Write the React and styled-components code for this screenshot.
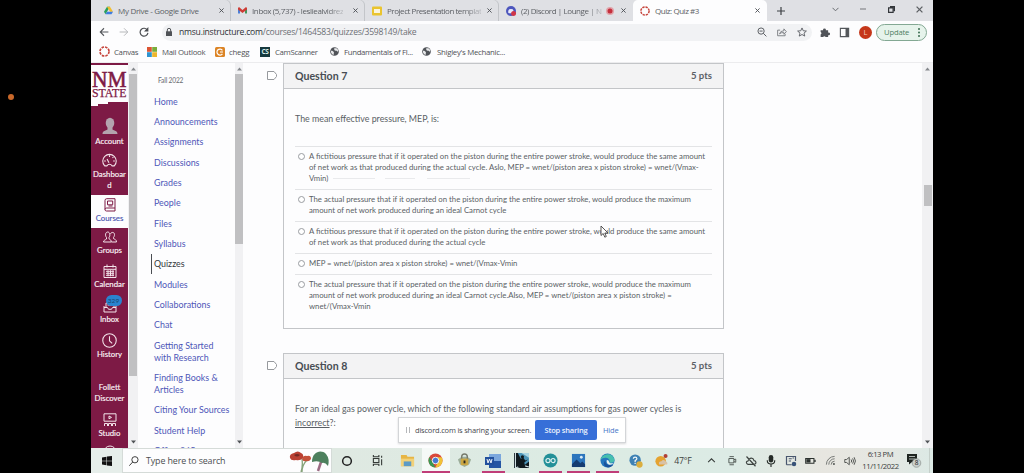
import React from 'react';
import styled, { createGlobalStyle } from 'styled-components';

const ui = '"Open Sans", "Noto Sans", sans-serif';
const lato = 'Lato, "Open Sans", sans-serif';
const maroon = '#7d1a45';

const GlobalStyle = createGlobalStyle`
	* {
		box-sizing: border-box;
	}
	body {
		margin: 0;
		background: #000;
		overflow: hidden;
	}
	svg {
		display: block;
		flex: none;
	}
`;

const Desktop = styled.main`
	position: relative;
	height: 473px;
	padding: 0 91px;
	background: #000;
`;

const Screen = styled.div`
	width: 842px;
	height: 473px;
	display: flex;
	flex-direction: column;
	background: #fdfdfe;
	font-family: ${ui};
	white-space: nowrap;
	overflow: hidden;
`;

const RecordDot = styled.span`
	position: absolute;
	left: 8px;
	top: 94px;
	width: 6px;
	height: 6px;
	border-radius: 50%;
	background: #c8682a;
`;

/* browser chrome */

const TabStrip = styled.div`
	flex: none;
	height: 21px;
	display: flex;
	padding-left: 6px;
	background: #dfe0e4;
`;

const Tab = styled.div`
	width: 134px;
	height: 21px;
	display: flex;
	align-items: center;
	padding: 0 7px 0 7px;
	border-radius: 5px 5px 0 0;
	background: ${p => (p.$active ? '#fdfdfe' : 'transparent')};
	box-shadow: ${p => (p.$divider ? 'inset -1px 0 #c3c5c9' : 'none')};
`;

const TabTitle = styled.span`
	margin-left: 5px;
	font-size: 8px;
	line-height: 20px;
	letter-spacing: ${p => p.$spacing || 0}px;
	color: #5c5f64;
	mask-image: ${p => (p.$fade ? 'linear-gradient(90deg, #000 82%, rgba(0, 0, 0, 0.25))' : 'none')};
`;

const TabEnd = styled.span`
	display: flex;
	align-items: center;
	gap: 7px;
	margin-left: auto;
`;

const WindowButtons = styled.div`
	margin-left: auto;
	display: flex;
	align-items: center;
	padding-bottom: 3px;
`;

const WindowButton = styled.span`
	width: 28px;
	display: flex;
	justify-content: center;
`;

const NewTab = styled.span`
	width: 27px;
	display: flex;
	align-items: center;
	justify-content: center;
`;

const AddressRow = styled.div`
	flex: none;
	height: 22px;
	display: flex;
	align-items: center;
	padding: 0 6px 0 8px;
`;

const NavButtons = styled.div`
	width: 63px;
	display: flex;
	align-items: center;
	gap: 10px;
`;

const Omnibox = styled.div`
	width: 650px;
	height: 17px;
	display: flex;
	align-items: center;
	padding: 0 5px 0 4px;
	border-radius: 9px;
	background: #f1f2f4;
`;

const Url = styled.span`
	flex: 1;
	margin-left: 7px;
	font-size: 8.6px;
	letter-spacing: -0.24px;
	color: #6d7075;

	b {
		font-weight: 400;
		color: #2e3034;
	}
`;

const OmniIcons = styled.div`
	display: flex;
	gap: 10px;
`;

const ToolbarIcons = styled.div`
	flex: 1;
	display: flex;
	align-items: center;
	justify-content: flex-end;
	gap: 9px;
`;

const Avatar = styled.span`
	width: 13px;
	height: 13px;
	border-radius: 50%;
	background: #c5371a;
	color: #f5cdbb;
	font-size: 7.5px;
	line-height: 13px;
	text-align: center;
`;

const UpdateButton = styled.span`
	width: 51px;
	height: 17px;
	margin-left: -5px;
	display: flex;
	align-items: center;
	justify-content: space-between;
	padding: 0 6px 0 7px;
	border: 1px solid #83a893;
	border-radius: 9px;
	background: #e6f3eb;
	font-size: 7.6px;
	letter-spacing: -0.15px;
	color: #4c7e62;
`;

const Bookmarks = styled.div`
	flex: none;
	height: 20px;
	display: flex;
	align-items: center;
	padding: 0 0 2px 8px;
	border-bottom: 1px solid #ececee;
`;

const Bookmark = styled.span`
	width: ${p => p.$width}px;
	display: flex;
	align-items: center;
	gap: ${p => p.$gap || 4}px;
	font-size: 7.8px;
	letter-spacing: ${p => p.$spacing || 0}px;
	color: #505257;
`;

/* page */

const Page = styled.div`
	flex: 1;
	min-height: 0;
	display: flex;
	font-family: ${lato};
`;

const GlobalNav = styled.nav`
	width: 37px;
	overflow: hidden;
	background: ${maroon};
	border-top: 2px solid ${maroon};
`;

const GlobalItem = styled.a`
	height: ${p => p.$height}px;
	display: flex;
	flex-direction: column;
	align-items: center;
	justify-content: flex-end;
	gap: 1px;
	padding-bottom: 4px;
	background: ${p => (p.$active ? '#fdfdfe' : 'transparent')};
	color: ${p => (p.$active ? maroon : '#f3e4ea')};
`;

const GlobalLabel = styled.span`
	font-size: 7.8px;
	line-height: 11px;
	text-align: center;
	white-space: pre;
	color: ${p => (p.$active ? '#4a55b0' : '#fbf3f6')};
	-webkit-text-stroke: 0.15px;
`;

const IconHolder = styled.span`
	position: relative;
`;

const Badge = styled.span`
	position: absolute;
	left: 3px;
	top: -4px;
	width: 16px;
	height: 11px;
	border-radius: 6px;
	background: #2a83cf;
	color: #17466f;
	font-size: 6.5px;
	line-height: 11px;
	text-align: center;
`;

const ScrollTrack = styled.div`
	width: ${p => p.$width}px;
	display: flex;
	flex-direction: column;
	align-items: center;
	padding: 4px 0;
	background: #f1f1f3;
`;

const Thumb = styled.div`
	width: ${p => p.$width}px;
	height: ${p => p.$height}px;
	margin-top: ${p => p.$offset}px;
	margin-bottom: auto;
	background: #c0c0c2;
`;

const CourseNav = styled.nav`
	width: 97px;
	padding: 12px 0 0 13px;
	overflow: hidden;
`;

const Term = styled.div`
	padding-left: 7px;
	font-size: 6.6px;
	line-height: 11px;
	letter-spacing: -0.15px;
	color: #66696e;
	margin-bottom: 5.5px;
`;

const CourseLink = styled.a`
	display: block;
	padding: 4.2px 0 4.15px 3px;
	font-size: 8.9px;
	line-height: 12px;
	white-space: pre;
	color: ${p => (p.$active ? '#33383d' : '#4e57b8')};
	box-shadow: ${p => (p.$active ? 'inset 1px 0 #4a4d52' : 'none')};
`;

const Content = styled.section`
	flex: 1;
	display: flex;
	flex-direction: column;
	gap: 24px;
	padding-left: 24px;
	overflow: hidden;
`;

const QuestionRow = styled.div`
	display: flex;
	align-items: flex-start;
	gap: 6px;

	> svg {
		margin-top: 8px;
	}
`;

const Card = styled.article`
	width: 441px;
	height: ${p => p.$height}px;
	border: 1px solid #c3c5c8;
`;

const CardHeader = styled.header`
	height: 25px;
	display: flex;
	align-items: center;
	justify-content: space-between;
	padding: 0 11px 1px;
	border-bottom: 1px solid #c3c5c8;
	background: #f3f3f4;
	font-weight: 700;
	color: #474d53;
`;

const Heading = styled.span`
	font-size: 10.6px;
`;

const Points = styled.span`
	font-size: 9.6px;
	color: #5b6066;
`;

const CardBody = styled.div`
	padding: 23px 11px 0;
	font-size: 8.85px;
	line-height: 13.5px;
	color: #5a5f65;
`;

const Prompt = styled.p`
	margin: 0 0 20.5px;
`;

const Answer = styled.label`
	display: flex;
	align-items: flex-start;
	gap: 4px;
	padding: 4px 0 5px 3px;
	border-top: 1px solid #e3e4e6;
	font-size: 7.75px;
	line-height: 11px;
	white-space: pre;
`;

const Radio = styled.span`
	flex: none;
	width: 7px;
	height: 7px;
	margin-top: 2px;
	border: 1px solid #999ca1;
	border-radius: 50%;
	background: #fff;
`;

const Smear = styled.span`
	display: inline-block;
	width: ${p => p.$width}px;
	height: 1px;
	margin-left: ${p => p.$gap}px;
	vertical-align: 2px;
	background: #e9eaec;
`;

/* overlays */

const ShareBar = styled.div`
	position: absolute;
	left: 398px;
	top: 417px;
	width: 228px;
	height: 26px;
	display: flex;
	align-items: center;
	padding: 0 5px 0 7px;
	border: 1px solid #d3d5d8;
	background: #fff;
	box-shadow: 0 1px 2px rgba(0, 0, 0, 0.15);
	font: 7.5px ${ui};
	letter-spacing: -0.2px;
	color: #44474c;
	white-space: nowrap;
`;

const Grip = styled.span`
	flex: none;
	width: 4px;
	height: 6px;
	margin-right: 5px;
	border: solid #b5b7ba;
	border-width: 0 1px;
`;

const StopButton = styled.span`
	flex: none;
	width: 62px;
	height: 20px;
	margin: 0 6px 0 auto;
	border-radius: 2px;
	background: #376fd8;
	color: #eef3fd;
	font-weight: 600;
	font-size: 7.5px;
	line-height: 20px;
	text-align: center;
`;

const HideLink = styled.span`
	width: 17px;
	font-size: 7.5px;
	color: #4576c8;
`;

const Pointer = styled.svg`
	position: absolute;
	left: 600px;
	top: 225px;
`;

/* taskbar */

const Taskbar = styled.footer`
	flex: none;
	height: 25px;
	display: flex;
	background: linear-gradient(90deg, #dfe9e2 30%, #dcebe3 55%, #dcebe5 76%, #e7e6e0 87%, #e5e7e2 94%, #dce9e5);

	> * {
		flex: none;
	}
`;

const StartButton = styled.span`
	width: 31px;
	display: flex;
	align-items: center;
	justify-content: center;
	background: #e6eeea;
`;

const SearchBox = styled.div`
	width: 210px;
	display: flex;
	align-items: center;
	padding-left: 6px;
	border: 1px solid #d5dbd8;
	background: #fdfdfe;
	font-size: 8.9px;
	color: #4b4e50;

	> span {
		flex: 1;
		margin-left: 7px;
		letter-spacing: -0.12px;
	}
`;

const TaskButton = styled.span`
	width: ${p => p.$width || 28.6}px;
	display: flex;
	align-items: center;
	justify-content: center;
	background-color: ${p => (p.$active ? '#f5f9f7' : 'transparent')};
	background-image: ${p => (p.$running ? 'linear-gradient(#c03d78, #c03d78)' : 'none')};
	background-size: ${p => (p.$active ? '100%' : '23px')} 2px;
	background-position: bottom center;
	background-repeat: no-repeat;
`;

const Weather = styled.span`
	width: 51.6px;
	display: flex;
	align-items: center;
	gap: 6px;
	padding-left: 5px;
	font-size: 8.8px;
	letter-spacing: -0.3px;
	color: #3c4340;
`;

const TrayIcon = styled.span`
	width: 19.75px;
	display: flex;
	align-items: center;
	justify-content: center;
`;

const Clock = styled.span`
	width: 41px;
	padding-top: 1px;
	font-size: 7.7px;
	line-height: 11.5px;
	letter-spacing: -0.45px;
	text-align: center;
	color: #3a403d;
`;

const Notifications = styled.span`
	width: 29px;
	display: flex;
	align-items: center;
	padding-left: 6px;
	border-right: 1px solid #c5cfca;
`;

const Close = ({ size = 5, color = '#4c4f54' }) => (
	<svg width={size} height={size} viewBox="0 0 6 6" stroke={color} strokeWidth="1.1">
		<path d="M.5 .5L5.5 5.5M5.5 .5L.5 5.5" />
	</svg>
);

const DriveIcon = () => (
	<svg width="9" height="9" viewBox="0 0 18 17">
		<path d="M6 1h6l-6 10-3 5-3-5z" fill="#289f5e" />
		<path d="M6 1h6l6 10h-6z" fill="#f4bd2b" />
		<path d="M6 11h12l-3 5H3z" fill="#3e7ce0" />
	</svg>
);

const GmailIcon = () => (
	<svg width="9" height="9" viewBox="0 0 18 16">
		<path d="M0 3v11h4V6z" fill="#4c7fd6" />
		<path d="M18 3v11h-4V6z" fill="#42975c" />
		<path d="M0 3l2-2 7 6 7-6 2 2v3l-9 7-9-7z" fill="#cf3c35" />
	</svg>
);

const SlidesIcon = () => (
	<svg width="10" height="10" viewBox="0 0 10 10">
		<rect x="0" y="0.5" width="10" height="9" rx="1" fill="#eac42e" />
		<rect x="2" y="3" width="6" height="4" fill="#fbf5dc" />
	</svg>
);

const DiscordIcon = () => (
	<svg width="10" height="10" viewBox="0 0 10 10">
		<circle cx="5" cy="5" r="5" fill="#4d56bd" />
		<path d="M2.2 6.7c0-2 .5-3 1.1-3.4q1.7-.5 3.4 0c.7.8 1.1 2 1.1 3.4q-1 .8-1.8.6H4q-1 0-1.8-.6z" fill="#e9eafa" />
		<circle cx="7.6" cy="7.4" r="2.5" fill="#cf3548" />
	</svg>
);

const CanvasIcon = ({ size = 10 }) => (
	<svg width={size} height={size} viewBox="0 0 10 10" fill="none">
		<circle cx="5" cy="5" r="4.1" stroke="#c6443b" strokeWidth="1.5" strokeDasharray="2.3 .92" />
	</svg>
);

const RecordingIcon = () => (
	<svg width="8" height="8" viewBox="0 0 8 8">
		<circle cx="4" cy="4" r="4" fill="#e1a4aa" />
		<circle cx="4" cy="4" r="2.5" fill="#c52f3d" />
	</svg>
);

const GlobeIcon = () => (
	<svg width="9" height="9" viewBox="0 0 10 10">
		<circle cx="5" cy="5" r="4.8" fill="#505358" />
		<path d="M1 4.2C2.6 4 4 4.8 4.4 5.8 4 7 4.5 8 3.8 8.8 1.8 8 .8 6.4 1 4.2zM5 1.2c1 .5 2 .2 2.6.6C9 3 9.3 4 9 5.3 7.8 5 8 4 6.4 4.2 5 4 4.2 3 5 1.2z" fill="#e8e9eb" />
	</svg>
);

const FlagIcon = () => (
	<svg width="10" height="9" viewBox="0 0 10 9" fill="#fff" stroke="#96999d" strokeWidth="1">
		<path d="M.5 .5H7L9.5 3.5V5.5L7 8.5H.5z" />
	</svg>
);

const Arrow = ({ down }) => (
	<svg width="5" height="4" viewBox="0 0 5 4" fill={down ? '#505357' : '#85888c'}>
		<path d={down ? 'M0 .5h5L2.5 3.5z' : 'M0 3.5h5L2.5 .5z'} />
	</svg>
);

const LineIcon = ({ d, size = 14, width = 1, children }) => (
	<svg width={size} height={size} viewBox="0 0 14 14" fill="none" stroke="currentColor" strokeWidth={width} strokeLinejoin="round">
		<path d={d} />
		{children}
	</svg>
);

const NmStateLogo = () => (
	<svg width="37" height="41" viewBox="0 0 37 41">
		<path d="M0 0H37V37H17V39H7V41H0z" fill="#fdfdfe" />
		<text x="1" y="22" fontFamily="Liberation Serif, serif" fontSize="23" textLength="34.5" lengthAdjust="spacingAndGlyphs" fill={maroon} stroke={maroon} strokeWidth="0.6">NM</text>
		<text x="1" y="31.7" fontFamily="Liberation Serif, serif" fontSize="11.5" textLength="34.5" lengthAdjust="spacingAndGlyphs" fill={maroon} stroke={maroon} strokeWidth="0.25">STATE</text>
	</svg>
);

const AccountIcon = () => (
	<svg width="18" height="18" viewBox="0 0 18 18" fill="#b3a3ad">
		<ellipse cx="9" cy="6" rx="4.3" ry="5.3" />
		<path d="M1.5 17c0-3.3 3-3 5-4.5V9h5v3.5c2 1.5 5 1.2 5 4.5z" />
	</svg>
);

const globalItems = [
	{ label: 'Account', height: 45, icon: <AccountIcon /> },
	{
		label: 'Dashboar\nd',
		height: 44,
		icon: <LineIcon size={15} d="M2.5 12A6.3 6.3 0 1 1 11.5 12H9.3A2.5 2.5 0 0 0 4.7 12zM6.5 9L4.7 5.5M7 2v1.8M2 7.5h1.6M12 7.5h-1.6M9.8 4.7l.8-1" />
	},
	{
		label: 'Courses',
		height: 33,
		active: true,
		icon: <LineIcon d="M2 11.5V2.5Q2 .7 3.7 .7H12V13H3.5Q2 13 2 11.5 2 10 3.5 10H12M4.5 3h5.2v3.8H4.5zM5.5 8h4" />
	},
	{
		label: 'Groups',
		height: 32,
		icon: <LineIcon d="M.5 12c0-2 2-2 3-3V7.5C1.8 5.5 2.5 2 4.7 2S7.6 5.5 6 7.5v1.3c1 .8 2.3 1 2.3 3.2zM7.5 4c.6-2.3 4-2 4 .5 0 1.6-.5 2.2-1 3v1c1 .8 3 1 3 3.5H8.5" />
	},
	{
		label: 'Calendar',
		height: 34,
		icon: <LineIcon d="M1 2.5h12v11H1zM1 5.3h12M4 .5v3M10 .5v3M3 7.3h8M3 9.3h8M3 11.3h8M5 6.3v6M7.5 6.3v6M10 6.3v6" />
	},
	{
		label: 'Inbox',
		height: 35,
		badge: '329',
		icon: <LineIcon d="M1 7v6h12V7M1 8.5h3.5l1 1.8h3l1-1.8H13M3 8V4h8v4M4.5 6h5" />
	},
	{
		label: 'History',
		height: 35,
		icon: <LineIcon size={15} d="M7 3v4.3l2.5 2.4"><circle cx="7" cy="7" r="6.3" /></LineIcon>
	},
	{ label: 'Follett\nDiscover', height: 44 },
	{
		label: 'Studio',
		height: 35,
		icon: <LineIcon d="M1 .8h12v7.4H1zM6 3l2.5 1.4L6 5.8zM1.5 13v-2.5h3V13M5.5 13v-2.5h3V13M9.5 13v-2.5h3V13" />
	}
];

const courseLinks = [
	'Home', 'Announcements', 'Assignments', 'Discussions', 'Grades', 'People', 'Files',
	'Syllabus', 'Quizzes', 'Modules', 'Collaborations', 'Chat', 'Getting Started\nwith Research',
	'Finding Books &\nArticles', 'Citing Your Sources', 'Student Help', 'Office 365'
];

const answers = [
	'A fictitious pressure that if it operated on the piston during the entire power stroke, would produce the same amount\nof net work as that produced during the actual cycle. Aslo, MEP = wnet/(piston area x piston stroke) = wnet/(Vmax-\nVmin)',
	'The actual pressure that if it operated on the piston during the entire power stroke, would produce the maximum\namount of net work produced during an ideal Carnot cycle',
	'A fictitious pressure that if it operated on the piston during the entire power stroke, would produce the same amount\nof net work as that produced during the actual cycle',
	'MEP = wnet/(piston area x piston stroke) = wnet/(Vmax-Vmin',
	'The actual pressure that if it operated on the piston during the entire power stroke, would produce the maximum\namount of net work produced during an ideal Carnot cycle.Also, MEP = wnet/(piston area x piston stroke) =\nwnet/(Vmax-Vmin'
];

const tabs = [
	{ title: 'My Drive - Google Drive', icon: <DriveIcon />, divider: true, spacing: -0.3 },
	{ title: 'Inbox (5,737) - lesliealvidrez', icon: <GmailIcon />, divider: true, fade: true, spacing: -0.38 },
	{ title: 'Project Presentation templat', icon: <SlidesIcon />, divider: true, fade: true, spacing: -0.45 },
	{ title: '(2) Discord | Lounge | N', icon: <DiscordIcon />, fade: true, recording: true, spacing: -0.42 },
	{ title: 'Quiz: Quiz #3', icon: <CanvasIcon />, active: true, spacing: -0.45 }
];

const OutlookIcon = () => (
	<svg width="10" height="10" viewBox="0 0 10 10">
		<path d="M0 0h4.8v4.8H0z" fill="#dc5433" />
		<path d="M5.2 0H10v4.8H5.2z" fill="#79ad3b" />
		<path d="M0 5.2h4.8V10H0z" fill="#2e94d0" />
		<path d="M5.2 5.2H10V10H5.2z" fill="#edb62c" />
	</svg>
);

const CheggIcon = () => (
	<svg width="10" height="10" viewBox="0 0 10 10">
		<rect width="10" height="10" rx="1.5" fill="#dc8425" />
		<path d="M7.4 3.3A3 3 0 1 0 7.4 6.8M5 5h3" fill="none" stroke="#fff" strokeWidth="1.2" />
	</svg>
);

const CamScannerIcon = () => (
	<svg width="10" height="10" viewBox="0 0 10 10">
		<rect width="10" height="10" fill="#173a3e" />
		<text x="5" y="7.3" fontFamily="Open Sans" fontWeight="700" fontSize="6.5" textAnchor="middle" fill="#d8eeea">CS</text>
	</svg>
);

const bookmarks = [
	{ label: 'Canvas', icon: <CanvasIcon size={11} />, width: 48, spacing: -0.3 },
	{ label: 'Mail Outlook', icon: <OutlookIcon />, width: 68, gap: 5, spacing: -0.25 },
	{ label: 'chegg', icon: <CheggIcon />, width: 45, spacing: -0.2 },
	{ label: 'CamScanner', icon: <CamScannerIcon />, width: 70, gap: 5, spacing: -0.32 },
	{ label: 'Fundamentals of Fl...', icon: <GlobeIcon />, width: 92, gap: 5, spacing: -0.32 },
	{ label: "Shigley's Mechanic...", icon: <GlobeIcon />, width: 92, gap: 6, spacing: -0.28 }
];

const FlowerArt = () => (
	<svg width="42" height="23" viewBox="0 0 42 23">
		<path d="M13 10q1 7-1 13M18 11q-5 5-5 12" stroke="#86a37a" strokeWidth="1.3" fill="none" />
		<path d="M1 9q-1-4 4-5 4-3 7 0 3 1 2 5-3 3-7 2-5 1-6-2z" fill="#ba4032" />
		<path d="M13 10q1-4 5-3 4-1 4 3-2 3-5 2-3 1-4-2z" fill="#c4523b" />
		<path d="M5 6q3-2 6 0-3 3-6 0z" fill="#732823" />
		<path d="M33 10l-4 12" stroke="#9b6b83" strokeWidth="2.5" />
		<path d="M23 13C23 3 32 0 37 5q4 5 2 12-3-4-6-3-4-3-10-1z" fill="#4d805e" />
	</svg>
);

const Ic = ({ size = 14, children }) => (
	<svg width={size} height={size} viewBox="0 0 16 16" fill="none">{children}</svg>
);

const taskItems = [
	{ width: 30, icon: <Ic size={12}><circle cx="8" cy="8" r="5.8" stroke="#222" strokeWidth="2" /></Ic> },
	{ width: 31, icon: <Ic size={11}><path d="M2 0v2.5h8V0M2 16v-2.5h8V16M2 5h8v6H2zM14 1v3M14 6v9" stroke="#343a37" strokeWidth="1.6" /></Ic> },
	{ icon: <Ic size={15}><path d="M1 2h6l1 2h7v10H1z" fill="#e7b544" /><path d="M1 6h14v8H1z" fill="#f2d178" /><path d="M4 9h8v5H4z" fill="#5c9ac5" /></Ic> },
	{
		running: true,
		active: true,
		icon: (
			<Ic size={15}>
				<circle cx="8" cy="8" r="7.5" fill="#d9483b" />
				<path d="M1.5 4.3L8 15.5A7.5 7.5 0 0 1 1.5 4.3z" fill="#399852" />
				<path d="M8 15.5L11 8 8 4.5h6.6A7.5 7.5 0 0 1 8 15.5z" fill="#f0c335" />
				<circle cx="8" cy="8" r="3.5" fill="#4779d2" stroke="#f4f6f5" />
			</Ic>
		)
	},
	{ icon: <Ic size={15}><path d="M1 7l4-3h6l4 3-2 5-5 3-5-3z" fill="#9cad9a" /><path d="M5 7V4a3 3 0 0 1 6 0v3" stroke="#767b6c" strokeWidth="1.5" /><path d="M4 6h8v7H4z" fill="#cba743" /><path d="M8 8v3" stroke="#282620" strokeWidth="2" /></Ic> },
	{ running: true, icon: <Ic size={16}><path d="M4 1h12v14H4z" fill="#7ba7dd" /><path d="M4 8h12v7H4z" fill="#2555a3" /><path d="M0 4h9v8H0z" fill="#214f9c" /><path d="M2 6l1 4 1.5-4L6 10l1-4" stroke="#f0f4fa" /></Ic> },
	{ icon: <Ic size={15}><path d="M0 0h16v16H0z" fill="#0f191f" /><path d="M4 0h12v9l-5 4z" fill="#4c94b8" /><path d="M8 0h8v5z" fill="#a9d4e2" /><path d="M1.5 0v16M2 16q6-4 14-1" stroke="#d4e4e8" strokeWidth="1.2" /><circle cx="9" cy="4" r="1.7" fill="#0f191f" /><path d="M5 13l2-7 3-1 2 3 3-1-4 3 1 5H4z" fill="#0f191f" /></Ic> },
	{ running: true, icon: <Ic size={15}><circle cx="8" cy="8" r="7.5" fill="#239098" /><circle cx="5.3" cy="8" r="2.2" stroke="#e2f2f2" strokeWidth="1.2" /><circle cx="10.7" cy="8" r="2.2" stroke="#e2f2f2" strokeWidth="1.2" /></Ic> },
	{ running: true, icon: <Ic size={15}><path d="M1 1h14v14H1z" fill="#2c75bd" /><path d="M1 12l5-5 4 4 2-2 3 3v3H1z" fill="#153c72" /><circle cx="11" cy="4.5" r="1.5" fill="#d7e9f6" /></Ic> },
	{
		running: true,
		icon: (
			<Ic size={15}>
				<circle cx="8" cy="8" r="7.5" fill="#2476be" />
				<path d="M.6 7C2 1 13-2 15.4 7c.4 3-3 4-5.400 3 1-3-1-5-4-5-2.500 0-4 1-5.400 2z" fill="#46bfae" />
				<path d="M6 8c-1 3 2 6 8 4.5-2 3-5 3.3-7 2.5-3-1-4-5-1-7z" fill="#1a529c" />
				<path d="M7 8q2-2 3 2 2 2 5 0-2 3-5 2.5-3-.5-3-4.5z" fill="#e6f1ee" />
			</Ic>
		)
	},
	{ icon: <Ic size={14}><circle cx="7" cy="7" r="6.5" fill="#3e81b4" /><path d="M5 5.5q0-2 2-2t2 2q0 1.2-2 2v1.5M7 10v1.5" stroke="#f0f6f8" strokeWidth="1.4" /><circle cx="12" cy="12" r="3.6" fill="#dbae3e" /></Ic> }
];

const trayItems = [
	<Ic size={9}><path d="M2 11l6-6 6 6" stroke="#353b38" strokeWidth="1.8" /></Ic>,
	<Ic size={10}><path d="M4 1h7M3 4h8v7H3zM11 6l3-1v5l-3-1M4 14h7" stroke="#454b48" strokeWidth="1.4" /></Ic>,
	<Ic size={12}><path d="M4 12.5h8q3-.5 2.5-3-.5-2-2.5-2-1-4-5-3-2.5.8-3 3.5-2.5.5-2 2.5.5 1.8 2 2zM2 2l12 13" stroke="#3d4340" strokeWidth="1.6" /></Ic>,
	<Ic size={12}><rect x="5" y="0" width="6" height="10" rx="3" fill="#242a27" /><path d="M3 7q0 5 5 5t5-5M8 12v4" stroke="#242a27" strokeWidth="1.5" /></Ic>,
	<Ic size={12}><path d="M2 13V2h12v6M2 13h7M5 5h4M5 8h3M10 4h2" stroke="#48566e" strokeWidth="1.6" /><circle cx="12" cy="12" r="3" fill="#395379" /></Ic>,
	<Ic size={11}><path d="M1 5h12v7H1z" stroke="#2b312e" strokeWidth="1.5" /><path d="M2 6h6v5H2z" fill="#2b312e" /><path d="M14.5 7v3" stroke="#2b312e" strokeWidth="2" /></Ic>,
	<Ic size={11}><path d="M2 14A12 12 0 0 1 14 2M5.5 14A8.5 8.5 0 0 1 14 5.5M9 14a5 5 0 0 1 5-5" stroke="#727673" strokeWidth="1.4" /><circle cx="13" cy="13" r="1.5" fill="#535754" /></Ic>,
	<Ic size={12}><path d="M1 6h2.5L7 3v10l-3.5-3H1zM9.5 6q1.5 2 0 4M11.5 4.5q2.5 3.5 0 7M13.5 3q3.5 5 0 10" stroke="#484c49" strokeWidth="1.2" /></Ic>
];

const Question = ({ number, height, children }) => (
	<QuestionRow>
		<FlagIcon />
		<Card $height={height}>
			<CardHeader>
				<Heading>Question {number}</Heading>
				<Points>5 pts</Points>
			</CardHeader>
			<CardBody>{children}</CardBody>
		</Card>
	</QuestionRow>
);

const Scrollbar = ({ width, thumb, height, offset }) => (
	<ScrollTrack $width={width}>
		<Arrow />
		<Thumb $width={thumb} $height={height} $offset={offset} />
		<Arrow down />
	</ScrollTrack>
);

const BrowserChrome = () => (
	<>
		<TabStrip>
			{tabs.map(tab => (
				<Tab key={tab.title} $active={tab.active} $divider={tab.divider}>
					{tab.icon}
					<TabTitle $fade={tab.fade} $spacing={tab.spacing}>{tab.title}</TabTitle>
					<TabEnd>
						{tab.recording && <RecordingIcon />}
						<Close />
					</TabEnd>
				</Tab>
			))}
			<NewTab>
				<svg width="8" height="8" viewBox="0 0 8 8" stroke="#3d4044" strokeWidth="1.2"><path d="M4 0v8M0 4h8" /></svg>
			</NewTab>
			<WindowButtons>
				<WindowButton><svg width="7" height="5" viewBox="0 0 7 5" fill="none" stroke="#6a6d71"><path d="M.5 .8l3 3 3-3" /></svg></WindowButton>
				<WindowButton><svg width="6" height="2" viewBox="0 0 6 2"><path d="M0 .5h6v1H0z" fill="#74777b" /></svg></WindowButton>
				<WindowButton><svg width="7" height="7" viewBox="0 0 7 7" fill="none" stroke="#33363a" strokeWidth="1.2"><path d="M.6 1.8h4.5v4.6H.6zM2 .6h4.4v4.6" /></svg></WindowButton>
				<WindowButton><Close size={7} color="#5c5f63" /></WindowButton>
			</WindowButtons>
		</TabStrip>
		<AddressRow>
			<NavButtons>
				<Ic size={10}><path d="M15 8H2M8 2L2 8l6 6" stroke="#55585c" strokeWidth="1.7" /></Ic>
				<Ic size={10}><path d="M1 8h13M8 2l6 6-6 6" stroke="#b2b4b8" strokeWidth="1.5" /></Ic>
				<Ic size={10}><path d="M13.5 5A6.3 6.3 0 1 0 14.3 9.5" stroke="#4a4d51" strokeWidth="1.9" /><path d="M15 0v7H8z" fill="#4a4d51" /></Ic>
			</NavButtons>
			<Omnibox>
				<svg width="6" height="8" viewBox="0 0 6 8"><path d="M1.3 4V2a1.7 1.7 0 0 1 3.4 0v2" fill="none" stroke="#4f5256" /><path d="M0 3.3h6V8H0z" fill="#4f5256" /></svg>
				<Url><b>nmsu.instructure.com</b>/courses/1464583/quizzes/3598149/take</Url>
				<OmniIcons>
					<Ic size={10}><circle cx="6.5" cy="6.5" r="5" stroke="#5d6065" strokeWidth="1.6" /><path d="M10 10l5 5M4 6.5h5" stroke="#5d6065" strokeWidth="1.6" /></Ic>
					<Ic size={10}><path d="M5 5H1v9h12v-3M4 11q1-5 7-5V3l4 4.5-4 4V9q-5-.5-7 2z" stroke="#74777b" strokeWidth="1.4" /></Ic>
					<Ic size={10}><path d="M8 1.5l2 4.5 5 .5-3.8 3.3 1.2 4.7L8 12l-4.4 2.5 1.2-4.7L1 6.5 6 6z" stroke="#5d6065" strokeWidth="1.5" /></Ic>
				</OmniIcons>
			</Omnibox>
			<ToolbarIcons>
				<Ic size={10}><path d="M1 5h4a2.2 2.2 0 1 1 4.3 0H13v4a2.2 2.2 0 1 1 0 4v3H9a2.2 2.2 0 0 0-4 0H1v-4a2.2 2.2 0 0 0 0-4z" fill="#505358" /></Ic>
				<Ic size={11}><path d="M2 2h12v12H2z" stroke="#54575b" strokeWidth="1.6" /><path d="M9.5 2H14v12H9.5z" fill="#54575b" /></Ic>
				<Avatar>L</Avatar>
				<UpdateButton>
					Update
					<svg width="2" height="9" viewBox="0 0 2 9" fill="#3b6e51"><circle cx="1" cy="1" r="1" /><circle cx="1" cy="4.5" r="1" /><circle cx="1" cy="8" r="1" /></svg>
				</UpdateButton>
			</ToolbarIcons>
		</AddressRow>
		<Bookmarks>
			{bookmarks.map(({ label, icon, width, gap, spacing }) => (
				<Bookmark key={label} $width={width} $gap={gap} $spacing={spacing}>{icon}{label}</Bookmark>
			))}
		</Bookmarks>
	</>
);

const CanvasPage = () => (
	<Page>
		<GlobalNav>
			<NmStateLogo />
			{globalItems.map(({ label, height, active, icon, badge }) => (
				<GlobalItem key={label} $height={height} $active={active}>
					<IconHolder>
						{icon}
						{badge && <Badge>{badge}</Badge>}
					</IconHolder>
					<GlobalLabel $active={active}>{label}</GlobalLabel>
				</GlobalItem>
			))}
			<GlobalItem $height={20}>
				<LineIcon d=""><circle cx="7" cy="7" r="6" /></LineIcon>
			</GlobalItem>
		</GlobalNav>
		<Scrollbar width={10} thumb={8} height={302} offset={3} />
		<CourseNav>
			<Term>Fall 2022</Term>
			{courseLinks.map(link => (
				<CourseLink key={link} $active={link === 'Quizzes'}>{link}</CourseLink>
			))}
		</CourseNav>
		<Scrollbar width={8} thumb={8} height={170} offset={3} />
		<Content>
			<Question number={7} height={266}>
				<Prompt>The mean effective pressure, MEP, is:</Prompt>
				{answers.map((answer, i) => (
					<Answer key={`answer-${i}`}>
						<Radio />
						<span>
							{answer}
							{i === 0 && <><Smear $width={42} $gap={5} /><Smear $width={30} $gap={10} /><Smear $width={43} $gap={12} /></>}
						</span>
					</Answer>
				))}
			</Question>
			<Question number={8} height={140}>
				<Prompt>
					For an ideal gas power cycle, which of the following standard air assumptions for gas power cycles is<br />
					<u>incorrect</u>?:
				</Prompt>
			</Question>
		</Content>
		<Scrollbar width={11} thumb={8} height={21} offset={114} />
	</Page>
);

const App = () => (
	<Desktop>
		<GlobalStyle />
		<Screen>
			<BrowserChrome />
			<CanvasPage />
			<Taskbar>
				<StartButton>
					<svg width="10" height="10" viewBox="0 0 10 10" fill="#111"><path d="M0 1.4l4.5-.7v4H0zM5 .6L10 0v4.7H5zM0 5.3h4.5v4L0 8.6zM5 5.3h5V10l-5-.6z" /></svg>
				</StartButton>
				<SearchBox>
					<Ic size={10}><circle cx="9.5" cy="6" r="5" stroke="#333" strokeWidth="1.5" /><path d="M6 9.5L.5 15.5" stroke="#333" strokeWidth="1.5" /></Ic>
					<span>Type here to search</span>
					<FlowerArt />
				</SearchBox>
				{taskItems.map(({ icon, width, running, active }, i) => (
					<TaskButton key={`task-${i}`} $width={width} $running={running} $active={active}>{icon}</TaskButton>
				))}
				<Weather>
					<Ic size={13}><circle cx="7" cy="9" r="6.5" fill="#e5a331" /><path d="M5 13q-1-4 3-4 2-3 5 0 3 1 2 4z" fill="#d9c2a6" /><circle cx="13" cy="2.5" r="2.5" fill="#b04036" /></Ic>
					47°F
				</Weather>
				{trayItems.map((icon, i) => (
					<TrayIcon key={`tray-${i}`}>{icon}</TrayIcon>
				))}
				<Clock>6:13 PM<br />11/11/2022</Clock>
				<Notifications>
					<svg width="15" height="14" viewBox="0 0 15 14">
						<path d="M0 0h10v8H5l-3 2.5V8H0z" fill="#1f2522" />
						<path d="M2 2.5h6M2 5h6" stroke="#d5ddd9" strokeWidth="0.8" />
						<circle cx="9.5" cy="9" r="4.3" fill="#c9cfcc" stroke="#8c9490" strokeWidth="0.7" />
						<text x="9.5" y="11.4" fontFamily="Open Sans" fontSize="6.5" textAnchor="middle" fill="#222">8</text>
					</svg>
				</Notifications>
			</Taskbar>
		</Screen>
		<RecordDot />
		<ShareBar>
			<Grip />
			discord.com is sharing your screen.
			<StopButton>Stop sharing</StopButton>
			<HideLink>Hide</HideLink>
		</ShareBar>
		<Pointer width="9" height="14" viewBox="0 0 9 14" fill="#fff" stroke="#444" strokeWidth="0.9">
			<path d="M1 1v9.5l2.2-2 1.6 3.7 1.5-.7L4.8 8H8z" />
		</Pointer>
	</Desktop>
);

export default App;
